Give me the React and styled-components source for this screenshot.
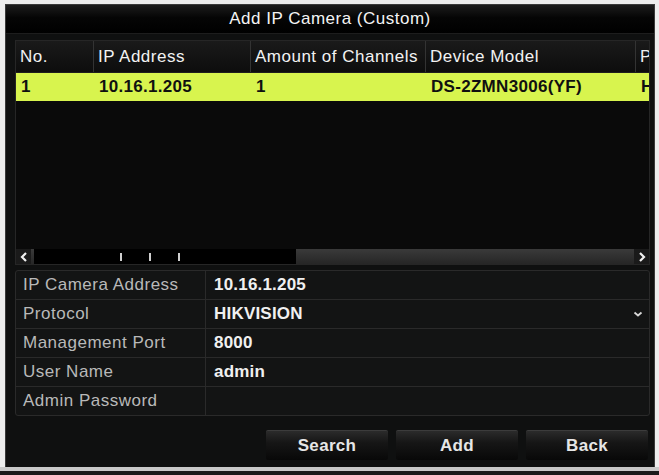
import React from "react";
import styled, { createGlobalStyle } from "styled-components";

const GlobalStyle = createGlobalStyle`
  html, body {
    margin: 0;
    padding: 0;
    background: #ededed;
  }
  body {
    font-family: "Liberation Sans", Arial, sans-serif;
  }
`;

const columns = [
  { key: "no", title: "No.", width: 78 },
  { key: "ip", title: "IP Address", width: 157 },
  { key: "channels", title: "Amount of Channels", width: 175 },
  { key: "model", title: "Device Model", width: 210 },
  { key: "protocol", title: "Protocol", width: 40 },
];

const devices = [
  { no: "1", ip: "10.16.1.205", channels: "1", model: "DS-2ZMN3006(YF)", protocol: "HIKVISION" },
];

const fields = [
  { label: "IP Camera Address", value: "10.16.1.205" },
  { label: "Protocol", value: "HIKVISION", select: true },
  { label: "Management Port", value: "8000" },
  { label: "User Name", value: "admin" },
  { label: "Admin Password", value: "" },
];

export default function App() {
  return (
    <>
      <GlobalStyle />
      <Frame>
        <Dialog>
          <TitleBar>Add IP Camera (Custom)</TitleBar>
          <Content>
            <TablePanel>
              <HeaderRow>
                {columns.map((c) => (
                  <HeaderCell key={c.key} $width={c.width}>
                    {c.title}
                  </HeaderCell>
                ))}
              </HeaderRow>
              {devices.map((d) => (
                <DataRow key={d.no} $selected>
                  {columns.map((c) => (
                    <DataCell key={c.key} $width={c.width}>
                      {d[c.key]}
                    </DataCell>
                  ))}
                </DataRow>
              ))}
              <TableBody />
              <ScrollBar>
                <ArrowBox>
                  <svg width="8" height="10" viewBox="0 0 8 10">
                    <path d="M6 1 L2 5 L6 9" stroke="#f0f0f0" strokeWidth="2.2" fill="none" />
                  </svg>
                </ArrowBox>
                <Thumb>
                  <Tick />
                  <Tick />
                  <Tick />
                </Thumb>
                <Track />
                <ArrowBox>
                  <svg width="8" height="10" viewBox="0 0 8 10">
                    <path d="M2 1 L6 5 L2 9" stroke="#f0f0f0" strokeWidth="2.2" fill="none" />
                  </svg>
                </ArrowBox>
              </ScrollBar>
            </TablePanel>

            <Form>
              {fields.map((f) => (
                <FormRow key={f.label}>
                  <Label>{f.label}</Label>
                  <Value>
                    <span>{f.value}</span>
                    {f.select && (
                      <svg width="10" height="6" viewBox="0 0 10 6">
                        <path d="M1.5 1.5 L5 4.5 L8.5 1.5" stroke="#d8d8d8" strokeWidth="1.8" fill="none" />
                      </svg>
                    )}
                  </Value>
                </FormRow>
              ))}
            </Form>

            <ButtonBar>
              <Button>Search</Button>
              <Button>Add</Button>
              <Button>Back</Button>
            </ButtonBar>
          </Content>
        </Dialog>
        <BottomStrip />
      </Frame>
    </>
  );
}

const Frame = styled.div`
  width: 659px;
  height: 475px;
  box-sizing: border-box;
  padding: 4px 4px 0 5px;
  display: flex;
  flex-direction: column;
  overflow: hidden;
`;

const Dialog = styled.div`
  height: 463px;
  box-sizing: border-box;
  background: #0f1010;
  border: 1px solid #3a3a3a;
  border-bottom: none;
  display: flex;
  flex-direction: column;
`;

const TitleBar = styled.div`
  height: 28px;
  flex: none;
  display: flex;
  align-items: center;
  justify-content: center;
  background: linear-gradient(#1c1c1c 0%, #050505 45%, #000 100%);
  border-bottom: 1px solid #1d1d1d;
  color: #f4f4f4;
  font-size: 17px;
  letter-spacing: 0.5px;
`;

const Content = styled.div`
  flex: 1;
  display: flex;
  flex-direction: column;
  padding: 6px 4px 0 9px;
`;

const TablePanel = styled.div`
  height: 223px;
  display: flex;
  flex-direction: column;
  background: #0b0b0b;
  border: 1px solid #262626;
  overflow: hidden;
`;

const HeaderRow = styled.div`
  height: 31px;
  display: flex;
  background: linear-gradient(#1a1a1a, #0d0d0d);
  border-bottom: 1px solid #1e1e1e;
  white-space: nowrap;
`;

const HeaderCell = styled.div`
  width: ${(p) => p.$width}px;
  flex: none;
  box-sizing: border-box;
  display: flex;
  align-items: center;
  padding-left: 4px;
  border-right: 1px solid #333;
  color: #f2f2f2;
  font-size: 17px;
  letter-spacing: 0.5px;
  overflow: hidden;
`;

const DataRow = styled.div`
  height: 28px;
  display: flex;
  background: ${(p) => (p.$selected ? "#d8f44e" : "transparent")};
  white-space: nowrap;
`;

const DataCell = styled.div`
  width: ${(p) => p.$width}px;
  flex: none;
  box-sizing: border-box;
  display: flex;
  align-items: center;
  padding-left: 5px;
  color: #101010;
  font-size: 17px;
  font-weight: 700;
  letter-spacing: 0.3px;
  overflow: hidden;
`;

const TableBody = styled.div`
  flex: 1;
  background: #0a0a0a;
`;

const ScrollBar = styled.div`
  height: 15px;
  display: flex;
  align-items: stretch;
  gap: 3px;
  background: linear-gradient(#3a3a3a, #262626);
`;

const ArrowBox = styled.div`
  width: 15px;
  flex: none;
  display: flex;
  align-items: center;
  justify-content: center;
  background: #1a1a1a;
`;

const Thumb = styled.div`
  width: 262px;
  flex: none;
  display: flex;
  align-items: center;
  gap: 27px;
  padding-left: 86px;
  box-sizing: border-box;
  background: #000;
`;

const Tick = styled.span`
  width: 2px;
  height: 8px;
  background: #cfcfcf;
`;

const Track = styled.div`
  flex: 1;
`;

const Form = styled.div`
  margin-top: 5px;
  display: flex;
  flex-direction: column;
  border: 1px solid #2a2a2a;
  border-radius: 3px;
  background: #131414;
`;

const FormRow = styled.div`
  height: 28px;
  display: flex;
  border-bottom: 1px solid #2a2a2a;
  &:last-child {
    border-bottom: none;
  }
`;

const Label = styled.div`
  width: 190px;
  flex: none;
  box-sizing: border-box;
  display: flex;
  align-items: center;
  padding-left: 7px;
  border-right: 1px solid #2a2a2a;
  color: #b9b9b9;
  font-size: 17px;
  letter-spacing: 0.5px;
`;

const Value = styled.div`
  flex: 1;
  display: flex;
  align-items: center;
  justify-content: space-between;
  padding: 0 6px 0 8px;
  color: #f0f0f0;
  font-size: 17px;
  font-weight: 700;
  letter-spacing: 0.2px;
`;

const ButtonBar = styled.div`
  margin-top: 14px;
  display: flex;
  justify-content: flex-end;
  gap: 8px;
  padding-right: 2px;
`;

const Button = styled.button`
  width: 122px;
  height: 30px;
  border: none;
  border-top: 1px solid #3c3c3c;
  border-radius: 2px;
  background: linear-gradient(#2b2b2b 0%, #161616 40%, #080808 100%);
  color: #e6e6e6;
  font-family: "Liberation Sans", Arial, sans-serif;
  font-size: 17px;
  font-weight: 700;
  letter-spacing: 0.3px;
  padding: 0;
`;

const BottomStrip = styled.div`
  flex: none;
  height: 4px;
  margin: 0 -4px 0 -5px;
  background: #c9c9c9;
  border-bottom: 4px solid #1a1a1a;
`;
